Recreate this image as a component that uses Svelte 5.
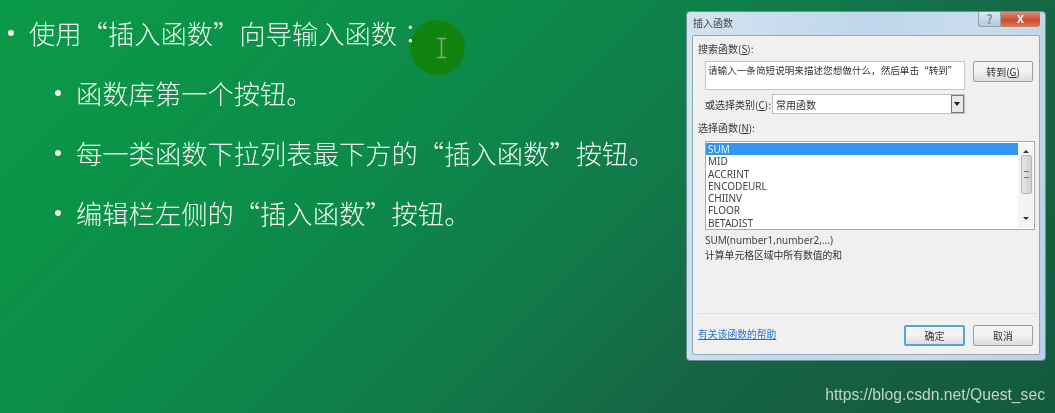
<script>
    const points = [
        "函数库第一个按钮。",
        "每一类函数下拉列表最下方的“插入函数”按钮。",
        "编辑栏左侧的“插入函数”按钮。"
    ];
    const functions = ["SUM", "MID", "ACCRINT", "ENCODEURL", "CHIINV", "FLOOR", "BETADIST"];
</script>

<div class="slide" lang="zh-CN">
    <div class="cursor-mark">
        <svg width="11" height="22" viewBox="0 0 11 22">
            <path d="M1 1.5h9M1 20.5h9M5.5 1.5v19" fill="none" stroke="#98a38c" stroke-width="1.5" />
        </svg>
    </div>

    <div class="content">
        <div class="point top"><span class="dot"></span>使用“插入函数”向导输入函数<span class="colon">：</span></div>
        {#each points as point}
            <div class="point sub"><span class="dot"></span>{point}</div>
        {/each}
    </div>

    <div class="dialog">
        <div class="titlebar">
            <span class="title">插入函数</span>
            <div class="controls">
                <span class="help">?</span>
                <span class="close">x</span>
            </div>
        </div>
        <div class="panel">
            <div class="label">搜索函数(<u>S</u>):</div>
            <div class="search-row">
                <div class="search-box">请输入一条简短说明来描述您想做什么，然后单击“转到”</div>
                <div class="btn go">转到(<u>G</u>)</div>
            </div>
            <div class="category-row">
                <span class="label">或选择类别(<u>C</u>):</span>
                <div class="select">
                    <span>常用函数</span>
                    <span class="select-arrow"></span>
                </div>
            </div>
            <div class="label pick">选择函数(<u>N</u>):</div>
            <div class="list">
                <div class="rows">
                    {#each functions as fn, i}
                        <div class="row" class:selected={i === 0}>{fn}</div>
                    {/each}
                </div>
                <div class="scrollbar">
                    <span class="up"></span>
                    <span class="thumb"><i></i></span>
                    <span class="down"></span>
                </div>
            </div>
            <div class="signature">SUM(number1,number2,...)</div>
            <div class="desc">计算单元格区域中所有数值的和</div>
            <div class="divider"></div>
            <div class="footer">
                <span class="help-link">有关该函数的帮助</span>
                <div class="btn ok">确定</div>
                <div class="btn">取消</div>
            </div>
        </div>
    </div>

    <div class="watermark">https://blog.csdn.net/Quest_sec</div>
</div>

<style>
    :global(body) {
        margin: 0;
    }

    .slide {
        position: relative;
        box-sizing: border-box;
        width: 1055px;
        height: 413px;
        overflow: hidden;
        display: flex;
        justify-content: space-between;
        align-items: flex-start;
        padding: 12px 10px 0 0;
        background: linear-gradient(135deg, #0a9a47 0%, #0b8f48 28%, #0d8549 43%, #127a49 56%, #166444 74%, #145a3e 100%);
        font-family: "Noto Sans CJK SC", "Noto Sans", sans-serif;
    }

    .content {
        padding-top: 1px;
        color: #f2f9f3;
        font-size: 26.3px;
        font-weight: 300;
        line-height: 40px;
        filter: blur(0.35px);
    }

    .point {
        display: flex;
        align-items: center;
        white-space: nowrap;
    }

    .top {
        padding-left: 8px;
    }

    .sub {
        margin-top: 20px;
        padding-left: 55px;
    }

    .dot {
        width: 6px;
        height: 6px;
        margin-right: 15px;
        border-radius: 50%;
        background: #f2f8f2;
    }

    .colon {
        font-family: "Noto Sans CJK TC", sans-serif;
    }

    .cursor-mark {
        position: absolute;
        left: 410px;
        top: 20px;
        width: 55px;
        height: 55px;
        display: flex;
        align-items: center;
        justify-content: center;
        padding-left: 7px;
        padding-top: 1px;
        box-sizing: border-box;
        border-radius: 50%;
        background: #118410;
        filter: blur(0.4px);
    }

    .dialog {
        box-sizing: border-box;
        width: 358px;
        height: 348px;
        display: flex;
        flex-direction: column;
        padding: 0 5px 5px;
        border-radius: 3px;
        background: linear-gradient(100deg, #d3e3f1, #bfd6ec 45%, #c9dced 70%, #b9d1e8);
        box-shadow: 0 0 0 1px #6f8f98;
        color: #333;
        font-size: 10px;
        line-height: 13px;
        filter: blur(0.45px);
    }

    .titlebar {
        height: 23px;
        flex: none;
        display: flex;
        justify-content: space-between;
        align-items: flex-start;
    }

    .title {
        padding: 4px 0 0 1px;
        color: #444;
    }

    .controls {
        display: flex;
    }

    .help {
        box-sizing: border-box;
        width: 23px;
        height: 15px;
        border: 1px solid #8ba4b8;
        border-top: none;
        border-radius: 0 0 0 3px;
        background: linear-gradient(#dce8f2, #b7cad9);
        color: #84929c;
        text-align: center;
        font-size: 13px;
        font-weight: 700;
        line-height: 13px;
    }

    .close {
        width: 39px;
        height: 15px;
        border-radius: 0 0 3px 0;
        background: linear-gradient(#d98e7e, #cf4a2a 55%, #d9805c);
        color: #f6eeee;
        text-align: center;
        font-size: 13px;
        font-weight: 700;
        line-height: 12px;
    }

    .panel {
        flex: 1;
        display: flex;
        flex-direction: column;
        box-sizing: border-box;
        padding: 6px 6px 7px 5px;
        border: 1px solid #93a9b8;
        border-radius: 2px;
        background: #f0f0f0;
    }

    .label {
        white-space: nowrap;
    }

    .search-row {
        display: flex;
        gap: 8px;
        margin: 6px 0 0 7px;
        align-items: flex-start;
    }

    .search-box {
        box-sizing: border-box;
        width: 260px;
        height: 29px;
        padding: 2px;
        border: 1px solid #c4c4c4;
        background: #fff;
        white-space: nowrap;
        overflow: hidden;
        font-size: 9.6px;
    }

    .btn {
        box-sizing: border-box;
        width: 60px;
        height: 21px;
        display: flex;
        align-items: center;
        justify-content: center;
        border: 1px solid #9c9c9c;
        border-radius: 2px;
        background: linear-gradient(#f4f4f4 45%, #dcdcdc);
    }

    .category-row {
        display: flex;
        align-items: center;
        gap: 1px;
        margin: 4px 0 0 7px;
    }

    .select {
        box-sizing: border-box;
        width: 193px;
        height: 20px;
        display: flex;
        align-items: center;
        justify-content: space-between;
        padding-left: 3px;
        border: 1px solid #c0c0c0;
        background: #fff;
    }

    .select-arrow {
        position: relative;
        width: 13px;
        height: 18px;
        box-sizing: border-box;
        border: 1px solid #777;
        background: #e8e8e8;
    }

    .select-arrow::after {
        content: "";
        position: absolute;
        left: 2.5px;
        top: 6px;
        border: 3.5px solid transparent;
        border-top: 4px solid #222;
        border-bottom: none;
    }

    .pick {
        margin-top: 7px;
    }

    .list {
        box-sizing: border-box;
        display: flex;
        width: 330px;
        height: 89px;
        margin: 7px 0 0 7px;
        padding: 1px 1px 1px 0;
        border: 1px solid #a5a9ad;
        background: #fff;
    }

    .rows {
        flex: 1;
    }

    .row {
        height: 12.3px;
        padding-left: 2px;
        font-family: "Noto Sans", sans-serif;
        font-size: 10px;
        line-height: 12.3px;
        color: #444;
    }

    .row.selected {
        background: #3396f0;
        color: #e4f1fc;
    }

    .scrollbar {
        width: 14px;
        display: flex;
        flex-direction: column;
        align-items: center;
        justify-content: space-between;
        padding: 7px 0 8px 1px;
        background: #f4f4f4;
    }

    .up, .down {
        width: 0;
        height: 0;
        border: 3px solid transparent;
    }

    .up {
        border-top: none;
        border-bottom: 3px solid #333;
    }

    .down {
        border-bottom: none;
        border-top: 3px solid #333;
    }

    .thumb {
        box-sizing: border-box;
        width: 11px;
        height: 39px;
        margin-bottom: 22px;
        display: flex;
        align-items: center;
        justify-content: center;
        border: 1px solid #b6b6b6;
        border-radius: 2px;
        background: linear-gradient(90deg, #e6e6e6, #cfcfcf);
    }

    .thumb i {
        width: 5px;
        height: 5px;
        border-top: 1px solid #777;
        border-bottom: 1px solid #777;
    }

    .signature {
        margin: 4px 0 0 7px;
        font-family: "Noto Sans", sans-serif;
        font-size: 10px;
        color: #444;
    }

    .desc {
        margin: 2px 0 0 7px;
        font-size: 9.8px;
    }

    .divider {
        height: 1px;
        margin: 51px -4px 0 0;
        background: #dedede;
    }

    .footer {
        display: flex;
        align-items: flex-start;
        gap: 8px;
        margin-top: 11px;
    }

    .help-link {
        margin-right: auto;
        padding-top: 3px;
        color: #2a74d0;
        font-size: 9.8px;
        text-decoration: underline;
    }

    .ok {
        width: 61px;
        border: 2px solid #58a5d2;
    }

    .watermark {
        position: absolute;
        right: 10px;
        bottom: 9px;
        font-family: "Liberation Sans", sans-serif;
        font-size: 15.7px;
        color: #c4d4cc;
        filter: blur(0.3px);
    }
</style>
